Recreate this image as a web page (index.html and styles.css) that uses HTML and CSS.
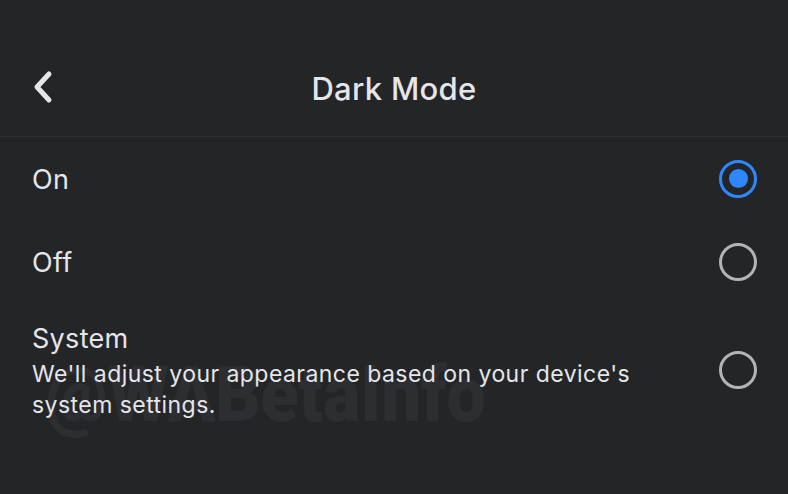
FILE: index.html
```html
<!DOCTYPE html>
<html lang="en">
<head>
    <meta charset="UTF-8">
    <title>Dark Mode</title>
    <link rel="stylesheet" href="styles.css">
</head>
<body>

<div class="screen">
    <header class="topbar">
        <button class="back-btn" aria-label="Back">
            <svg width="24" height="34" viewBox="0 0 24 34">
                <path d="M18 4 L6 17 L18 30" fill="none" stroke="#e4e6eb" stroke-width="5" stroke-linecap="round" stroke-linejoin="round"/>
            </svg>
        </button>
        <h1 class="title">Dark Mode</h1>
    </header>

    <div class="options">
        <div class="option">
            <div class="option-text">
                <div class="option-label">On</div>
            </div>
            <span class="radio checked"></span>
        </div>
        <div class="option">
            <div class="option-text">
                <div class="option-label">Off</div>
            </div>
            <span class="radio"></span>
        </div>
        <div class="option option-tall">
            <div class="watermark">@WABetaInfo</div>
            <div class="option-text">
                <div class="option-label">System</div>
                <div class="option-desc">We'll adjust your appearance based on your device's system settings.</div>
            </div>
            <span class="radio"></span>
        </div>
    </div>
</div>

</body>
</html>
```

FILE: styles.css
```css
:root {
    --bg: #242527;
    --line: #2e2f32;
    --text: #e4e6eb;
    --ring: #b0b3b8;
    --blue: #2d88ff;
    --mark: #2d2e31;
}

body {
    margin: 0;
    background-color: var(--bg);
    color: var(--text);
    font-family: Inter, 'Liberation Sans', Arial, sans-serif;
}

.screen {
    width: 788px;
    height: 494px;
    overflow: hidden;
}

.topbar {
    height: 137px;
    border-bottom: 1px solid var(--line);
    display: flex;
    align-items: center;
    justify-content: center;
    position: relative;
    padding-top: 40px;
    box-sizing: border-box;
}

.back-btn {
    position: absolute;
    left: 31px;
    top: 70px;
    background: none;
    border: none;
    padding: 0;
    width: 24px;
    height: 34px;
    cursor: pointer;
}

.title {
    margin: 0;
    font-size: 31px;
    font-weight: 500;
    letter-spacing: 0.3px;
}

.option {
    display: flex;
    align-items: center;
    justify-content: space-between;
    height: 83px;
    padding: 0 31px 0 32px;
    position: relative;
}

.option-tall {
    height: 134px;
}

.option-text {
    position: relative;
    z-index: 1;
    padding-top: 2px;
}

.option-label {
    font-size: 27px;
    line-height: 34px;
    letter-spacing: 0.3px;
}

.option-desc {
    font-size: 23px;
    line-height: 31px;
    letter-spacing: 0.45px;
    max-width: 630px;
    margin-top: 3px;
}

.radio {
    width: 38px;
    height: 38px;
    box-sizing: border-box;
    border: 3px solid var(--ring);
    border-radius: 50%;
    display: flex;
    align-items: center;
    justify-content: center;
    flex-shrink: 0;
}

.radio.checked {
    border-color: var(--blue);
}

.radio.checked::after {
    content: "";
    width: 19px;
    height: 19px;
    border-radius: 50%;
    background-color: var(--blue);
}

/* faint watermark sitting behind the System description */
.watermark {
    position: absolute;
    left: 45px;
    top: 64px;
    font-family: Roboto, sans-serif;
    font-weight: 900;
    font-size: 78px;
    line-height: 56px;
    color: var(--mark);
    transform: scaleX(0.9);
    transform-origin: left;
    white-space: nowrap;
}
```
